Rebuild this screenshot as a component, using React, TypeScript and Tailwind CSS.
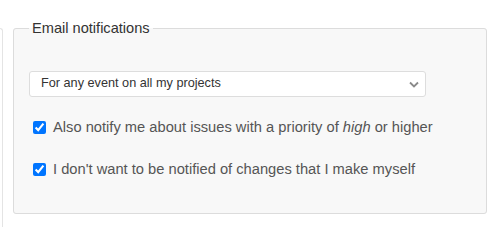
export default function App() {
  return (
    <div className="flex h-[227px] w-[500px] overflow-hidden bg-white font-['Liberation_Sans',Arial,sans-serif]">
      {/* edge of the panel on the left */}
      <div className="mt-[28px] w-[3px] shrink-0 rounded-tr-[3px] border-r border-t border-[#e4e4e4]" />

      <fieldset className="mt-[20px] ml-[10px] mr-[13px] flex-1 self-start rounded-[3px] border border-[#dcdcdc] bg-[#f8f8f8] px-[15px] pb-[34px]">
        <legend className="px-[3px] text-[14.6px] leading-[17px] text-[#333]">Email notifications</legend>

        <div className="mt-[34px] flex h-[26px] w-[397px] items-center justify-between rounded-[3px] border border-[#dddddd] bg-white pl-[11px] pr-[6px]">
          <span className="text-[12.7px] text-[#333]">For any event on all my projects</span>
          <svg width="10" height="7" viewBox="0 0 10 7" fill="none">
            <path d="M1 1.5l4 4 4-4" stroke="#8a8a8a" strokeWidth="1.8" />
          </svg>
        </div>

        <label className="mt-[20px] flex h-[20px] items-center gap-[7px] text-[14.7px] text-[#555]">
          <input type="checkbox" defaultChecked className="ml-[4px] h-[13px] w-[13px]" />
          <span>
            Also notify me about issues with a priority of <em>high</em> or higher
          </span>
        </label>

        <label className="mt-[22px] flex h-[20px] items-center gap-[7px] text-[14.7px] text-[#555]">
          <input type="checkbox" defaultChecked className="ml-[4px] h-[13px] w-[13px]" />
          <span>I don't want to be notified of changes that I make myself</span>
        </label>
      </fieldset>
    </div>
  );
}
